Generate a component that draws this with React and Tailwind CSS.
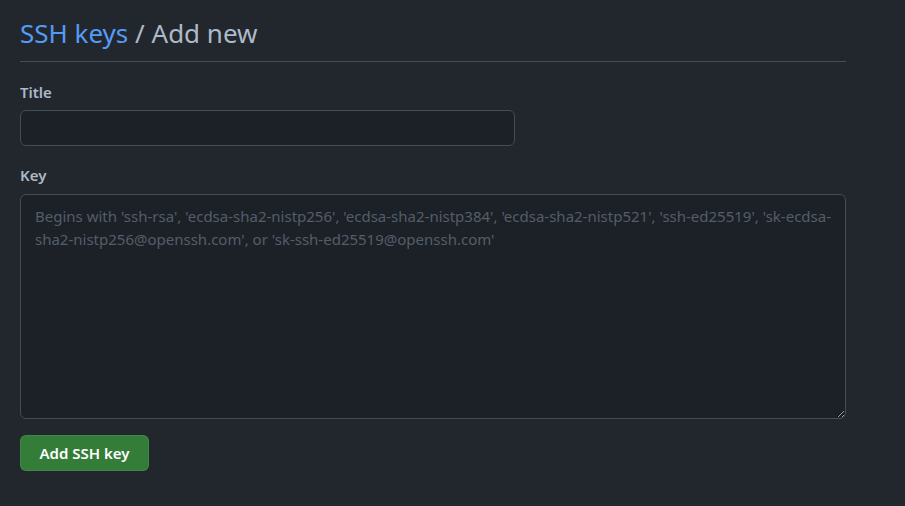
import { useState } from "react";

const font = { fontFamily: '"Noto Sans", "Open Sans", sans-serif' };

export default function App() {
  const [title, setTitle] = useState("");
  const [key, setKey] = useState("");

  return (
    <div className="min-h-[506px] w-full bg-[#22272e] text-[#adbac7]" style={font}>
      <div className="w-[826px] ml-5 pt-[15px]">
        {/* Header */}
        <div className="border-b border-[#444c56] pb-[10px]">
          <h1 className="text-[26px] leading-[36px] font-normal">
            <a href="#" className="text-[#539bf5]">SSH keys</a>
            <span className="text-[#adbac7]"> / Add new</span>
          </h1>
        </div>

        <form className="pt-[20px]" onSubmit={(e) => e.preventDefault()}>
          <div>
            <label className="block text-[15px] leading-[21px] font-semibold mb-[7px]">Title</label>
            <input
              value={title}
              onChange={(e) => setTitle(e.target.value)}
              className="block w-[495px] h-[36px] px-3 rounded-md border border-[#444c56] bg-[#1c2128] text-[15px] text-[#adbac7] outline-none"
            />
          </div>

          <div className="mt-[19px]">
            <label className="block text-[15px] leading-[21px] font-semibold mb-[8px]">Key</label>
            <textarea
              value={key}
              onChange={(e) => setKey(e.target.value)}
              placeholder="Begins with 'ssh-rsa', 'ecdsa-sha2-nistp256', 'ecdsa-sha2-nistp384', 'ecdsa-sha2-nistp521', 'ssh-ed25519', 'sk-ecdsa-sha2-nistp256@openssh.com', or 'sk-ssh-ed25519@openssh.com'"
              className="block w-full h-[225px] px-[14px] py-[10px] rounded-md border border-[#444c56] bg-[#1c2128] text-[15px] leading-[23px] text-[#adbac7] placeholder:text-[#545d68] outline-none"
            />
          </div>

          <button
            type="submit"
            className="mt-[16px] h-[36px] w-[129px] rounded-md border border-[rgba(205,217,229,0.1)] bg-[#347d39] text-white text-[15px] font-semibold"
          >
            Add SSH key
          </button>
        </form>
      </div>
    </div>
  );
}
